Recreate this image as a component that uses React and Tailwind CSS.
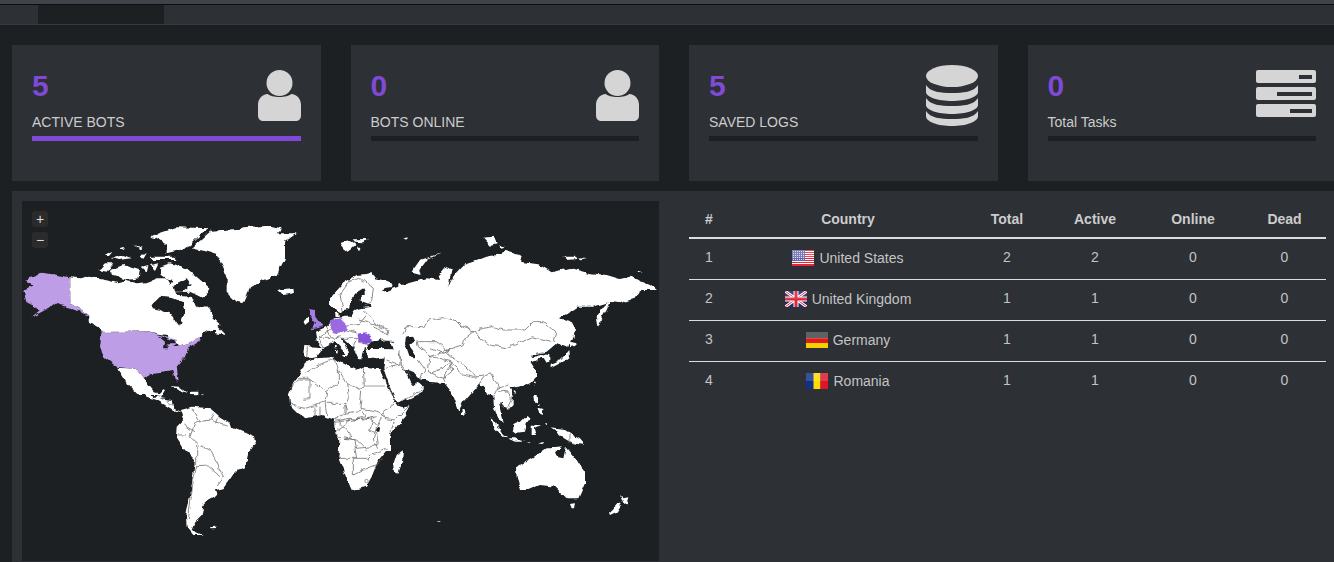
import React from 'react';

// Map shapes are traced per region; each frame's coordinates are 3x page pixels from its origin
const DARK = '#1c2022';

const REGIONS = [
  {
    // North America, Greenland
    frame: 'translate(10 195) scale(.33333)',
    land: [
      '180,247 210,250 240,242 270,252 300,258 325,265 350,258 380,265 410,262 440,250 470,250 480,268 495,240 520,245 540,262 570,270 600,280 580,310 560,340 585,330 600,345 610,370 632,390 620,400 648,420 620,415 580,420 570,430 540,445 510,455 490,440 470,420 440,415 420,410 275,412 270,400 240,380 238,365 205,335 180,327',
      '315,518 350,520 380,522 405,552 412,570 430,590 460,600 385,600 345,560 335,540',
      '545,160 600,110 680,105 700,97 780,92 815,100 800,115 860,115 825,140 825,190 800,240 760,255 720,280 700,325 680,320 650,290 650,250 640,220 620,180 590,170',
      '805,285 850,278 852,295 820,300',
      '445,115 500,97 600,100 570,120 540,150 510,165 470,175 470,150 440,130 420,125',
      '450,215 480,205 530,220 600,280 580,310 540,280 500,260 470,250 455,240',
      '300,225 340,210 390,225 385,250 350,255 310,240',
      '265,225 285,205 310,205 290,230',
      '280,180 310,168 300,180',
      '305,190 340,180 365,190 330,195',
      '385,180 410,178 400,195',
      '395,215 415,210 410,230',
      '420,210 445,205 435,225',
      '370,150 395,158 390,163',
      '420,185 490,185 500,195 430,195',
      '330,160 345,155 342,165',
      '590,395 625,395 648,420 620,410',
    ],
    seas: [
      '425,330 450,305 490,310 515,320 525,350 510,395 495,375 490,360 450,345 425,340',
      '490,270 530,250 545,270 520,290 495,290',
      '495,292 540,290 590,315 585,330 560,340 545,305 500,302',
      '575,420 600,405 620,405 610,425 590,435',
      '310,518 320,515 350,565 340,565',
    ],
    lines: ['180,247 180,327', '275,412 420,410'],
  },
  {
    // Russia, central Asia
    frame: 'translate(330 195) scale(.33333)',
    land: [
      '0,310 40,265 80,240 125,235 135,250 185,262 188,275 160,280 155,292 205,275 205,262 215,270 290,250 330,255 325,240 345,215 365,222 355,275 372,240 400,210 430,200 470,185 510,178 525,167 575,182 570,200 625,208 665,232 720,218 780,235 830,240 870,252 900,245 960,270 978,285 930,285 915,310 870,325 840,320 790,335 740,335 690,370 720,378 735,400 725,430 715,455 680,445 650,470 605,480 600,545 360,540 225,500 190,440 110,440 50,380 30,350 0,335',
      '800,365 820,335 845,310 830,345 815,370 805,395',
      '725,380 735,400 730,430 722,405',
      '28,145 60,135 80,150 55,172 40,160',
      '68,133 110,132 100,142 75,140',
      '82,158 95,158 90,165',
      '220,130 240,127 230,135',
      '460,128 490,125 500,145 480,150',
      '505,150 528,155 510,160',
      '700,185 735,185 740,192 710,195',
      '745,190 768,192 750,196',
      '920,230 938,232 925,235',
      '245,230 270,195 335,175 290,195 268,225 272,237',
    ],
    seas: [
      '100,283 105,295 85,315 120,328 125,335 90,340 75,345 60,365 35,365 30,355 58,340 60,318 80,295',
      '112,448 125,440 150,432 165,440 190,455 190,463 150,462 115,462',
      '228,428 245,425 252,440 240,450 255,480 255,490 240,488 232,465 225,445',
    ],
    lines: [
      '218,415 230,395 285,395 295,375 340,368 375,375 395,395 432,408',
      '432,408 460,400 490,395 520,405 585,405 610,380 640,380 680,415 672,440 605,425 570,440 530,458 480,450 450,430 432,408',
      '432,408 405,430 395,450 350,465 325,440 265,440 260,435',
      '262,440 265,455 300,485 345,470 360,485 390,500 440,545',
      '300,480 295,530 340,550 365,530 360,500',
      '208,475 215,510 240,545',
      '40,350 30,300 60,258 95,248',
      '95,250 130,280 125,320 100,335',
      '100,345 120,365 140,390 180,405 175,420 130,395',
      '340,465 360,460 345,475',
    ],
  },
  {
    // Europe, Turkey
    frame: 'translate(285 270) scale(.33333)',
    land: [
      '90,185 125,170 150,145 180,140 225,140 300,150 320,180 300,215 250,240 240,230 232,265 220,265 205,232 175,205 150,210 125,225 110,232 95,215',
      '58,228 115,232 95,262 65,265 55,250',
      '150,205 170,205 195,250 185,262 180,248 155,222',
      '245,240 270,232 330,235 350,245 345,265 300,262 250,268',
      '150,125 160,125 162,140 152,140',
      '170,255 185,255 180,263',
      '150,228 155,228 155,235 150,235',
      '150,240 155,240 155,250 150,250',
      '310,215 350,225 370,240 350,250 320,235',
      '55,150 72,143 72,155 60,165',
      '340,250 370,235 400,260 400,300 345,300 335,270',
    ],
    seas: [],
    lines: [
      '125,170 135,195 150,205 170,200',
      '185,165 225,160 240,140',
      '185,180 220,190',
      '220,150 270,165 300,180',
      '170,205 215,205 205,232',
      '220,215 250,225',
      '67,232 65,262',
      '150,170 100,205 115,232',
      '100,205 150,205',
    ],
  },
  {
    // North Africa, Arabia, Iran
    frame: 'translate(285 350) scale(.33333)',
    land: [
      '60,38 95,25 145,22 165,35 195,50 215,60 235,50 285,55 290,70 335,160 345,175 375,168 360,195 335,230 315,255 315,300 165,300 160,240 150,210 110,195 65,205 40,190 15,165 12,130 25,100 40,80',
      '295,55 300,15 360,15 360,65 375,95 385,108 400,97 417,110 412,125 380,142 340,160 318,120',
      '300,0 480,0 480,100 430,95 405,88 385,65 365,60 340,40 310,28',
    ],
    seas: ['272,240 280,230 288,235 286,245 276,245'],
    lines: [
      '60,70 100,45 150,25',
      '40,85 70,85 125,125 160,100 160,60 150,25',
      '235,55 238,110',
      '160,60 185,100 225,118 238,110',
      '185,100 190,145 180,170 185,185',
      '230,122 225,175',
      '225,175 260,180 290,190 330,160',
      '290,190 300,205 330,210 370,170',
      '330,210 315,250',
      '290,205 275,230 265,270 275,300',
      '15,115 40,90 75,90 75,145 55,148',
      '125,125 120,155 80,170 60,175 35,170 15,160',
      '120,155 125,195',
      '90,170 90,200',
      '105,170 105,195',
      '125,160 180,160 180,190 150,210',
      '180,190 230,180 240,200 205,210 160,215',
      '205,210 255,205 275,225',
      '160,215 185,240 200,260 180,265 215,270 235,290 245,300',
      '300,55 345,45 358,62',
      '338,160 385,130 405,125 412,110',
      '305,30 340,45',
      '345,0 345,45',
      '400,30 420,60 405,88',
    ],
  },
  {
    // South and East Asia, Japan, Indonesia
    frame: 'translate(430 340) scale(.33333)',
    land: [
      '0,0 395,0 365,15 340,35 325,30 310,30 295,45 305,55 325,45 335,42 358,45 358,65 345,68 335,52 318,65 305,70 318,90 318,112 300,130 262,145 238,140 248,165 248,195 232,212 218,182 208,190 222,245 205,235 192,205 190,170 172,165 160,140 148,130 100,185 85,215 60,150 40,125 0,120',
      '94,208 102,212 104,225 96,225',
      '250,152 258,150 256,160',
      '312,125 318,125 312,138',
      '362,75 385,65 410,40 418,30 420,50 405,62 370,80 362,85',
      '420,5 440,10 432,18 420,22',
      '310,165 320,165 322,185 312,185',
      '322,205 340,210 338,225 328,222',
      '250,255 270,245 290,225 300,235 290,250 285,275 260,278 250,270',
      '305,262 315,255 330,255 312,265 318,285 305,285',
      '178,232 195,245 222,285 232,292 220,290 195,265',
      '232,295 255,295 282,305 255,305',
      '365,265 385,268 405,270 420,280 450,298 465,315 430,310 405,295 380,275',
      '365,325 395,322 390,330 368,330',
      '325,190 332,190 330,198',
      '345,250 352,250 350,256',
      '290,308 305,306 300,310',
      '325,310 340,306 335,312',
    ],
    seas: [],
    lines: [
      '148,130 165,108 180,100 192,120 208,140 195,165 192,172',
      '90,95 100,105 130,112 160,108',
      '60,68 85,90 90,95',
      '0,100 40,85 62,65',
      '40,125 45,100 62,80',
      '205,145 235,135',
      '205,155 225,150 245,175 232,205 210,190',
      '0,25 40,40 60,30',
      '0,50 30,55 62,65',
      '420,280 420,310',
      '340,35 320,40',
    ],
  },
  {
    // Central America, Caribbean
    frame: 'translate(130 340) scale(.33333)',
    land: [
      '0,85 20,95 35,125 50,155 75,175 100,148 105,150 90,175 125,180 130,205 155,218 130,210 105,195 80,180 50,170 20,140',
      '120,138 150,140 175,160 150,150',
      '180,155 205,155 205,163 180,162',
      '212,160 220,160 220,163',
    ],
    seas: [],
    lines: ['85,165 100,180', '110,180 125,195'],
  },
  {
    // South America, southern Africa, Oceania
    frame: 'translate(130 380) scale(.33333)',
    land: [
      '150,90 185,80 240,85 270,110 295,125 300,140 375,172 378,185 355,220 345,262 315,275 305,290 280,325 258,330 262,345 235,360 220,375 215,405 195,425 185,450 218,465 190,465 170,440 168,410 180,350 190,280 195,240 160,205 138,170 140,140 160,120',
      '612,120 620,60 760,60 825,85 800,130 770,155 768,190 775,205 745,240 725,290 708,320 665,330 650,295 625,235 630,175 615,160',
      '800,225 822,208 820,240 805,278 792,272 790,255',
      '1158,262 1210,232 1250,205 1275,205 1285,232 1300,235 1308,200 1340,240 1365,280 1365,310 1345,355 1310,355 1275,320 1230,315 1195,330 1170,330 1160,290',
      '1320,372 1338,370 1335,385 1325,385',
      '1470,345 1480,355 1495,352 1490,370 1480,372',
      '1465,370 1475,372 1460,395 1440,405 1437,398',
      '243,442 256,440 256,444 244,445',
      '922,423 931,423 931,428 922,428',
    ],
    seas: [],
    lines: [
      '185,85 210,125 195,130 180,170 205,195',
      '160,135 195,155',
      '140,165 170,165',
      '205,195 240,210 260,245 270,270 280,290 265,315',
      '200,195 200,260 190,300 175,420',
      '200,260 235,258 270,290',
      '210,125 240,120 290,135',
      '240,120 250,100',
      '265,110 260,130',
      '640,170 675,180 680,205 725,200 745,195 740,160 720,150 730,110',
      '625,235 670,235 710,235 720,225 770,205',
      '670,235 670,285 700,270 735,260 755,240',
      '660,115 650,135 625,150 615,160 630,170',
      '675,205 680,235',
      '610,125 660,115 700,120 740,110',
    ],
  },
];

const HIGHLIGHTS = [
  { frame: REGIONS[0].frame, fill: '#bd9de6', points: '45,255 100,233 180,247 180,327 205,335 238,365 205,345 130,325 115,340 60,370 90,345 50,325 40,285 70,270' },
  { frame: REGIONS[0].frame, fill: '#bd9de6', points: '275,412 420,410 445,418 470,425 500,435 490,455 510,455 540,445 570,425 575,435 535,460 525,485 500,515 505,550 498,560 490,525 455,530 420,535 405,552 380,522 350,520 320,515 285,490 270,455' },
  { frame: REGIONS[0].frame, fill: DARK, points: '440,420 490,435 495,445 475,445 470,460 462,460 465,440' },
  { frame: REGIONS[2].frame, fill: '#a47ee4', points: '75,118 90,120 90,135 112,165 108,172 80,178 90,160 75,140' },
  { frame: REGIONS[2].frame, fill: '#9a6ae0', points: '140,150 165,145 185,165 185,180 165,195 145,190 135,165' },
  { frame: REGIONS[2].frame, fill: '#8653da', points: '218,195 240,190 258,198 262,215 240,222 220,210' },
];

function WorldMap() {
  return (
    <svg viewBox="22 201 637 360" className="block w-[637px] h-[360px]">
      {/* roughens the traced outlines so coasts read as coasts */}
      <filter id="rough" x="0" y="0" width="100%" height="100%" filterUnits="objectBoundingBox" colorInterpolationFilters="sRGB">
        <feTurbulence type="fractalNoise" baseFrequency="0.14" numOctaves="2" seed="4" result="noise" />
        <feDisplacementMap in="SourceGraphic" in2="noise" scale="5" xChannelSelector="R" yChannelSelector="G" />
      </filter>
      <g filter="url(#rough)">
        <rect x="22" y="201" width="637" height="360" fill="none" />
        {REGIONS.map((r, i) => (
          <g key={i} transform={r.frame} fill="#ffffff">
            {r.land.map((p, j) => <polygon key={j} points={p} />)}
          </g>
        ))}
        {REGIONS.map((r, i) => (
          <g key={i} transform={r.frame} fill={DARK}>
            {r.seas.map((p, j) => <polygon key={j} points={p} />)}
          </g>
        ))}
        {REGIONS.map((r, i) => (
          <g key={i} transform={r.frame} fill="none" stroke="#6f6f6f">
            {r.lines.map((p, j) => (
              <polyline key={j} points={p} strokeWidth="0.8" vectorEffect="non-scaling-stroke" />
            ))}
          </g>
        ))}
        {HIGHLIGHTS.map((h, i) => (
          <polygon key={i} transform={h.frame} points={h.points} fill={h.fill} />
        ))}
      </g>
      <g transform={REGIONS[3].frame} fill="none" stroke="#c4c4c4">
        <polyline points="238,108 300,108" strokeWidth="1.6" vectorEffect="non-scaling-stroke" />
        <polyline points="55,146 75,146" strokeWidth="1.6" vectorEffect="non-scaling-stroke" />
      </g>
      <circle cx="366.5" cy="481" r="1.7" fill="#ffffff" stroke="#6f6f6f" strokeWidth="0.7" />
    </svg>
  );
}

function UserIcon() {
  return (
    <svg width="43" height="51" viewBox="0 0 43 51" className="mt-[5px]" fill="#d5d5d5">
      <circle cx="21.5" cy="13" r="13" />
      <path d="M10 24 C13 28 30 28 33 24 C39 24 43 29 43 35 L43 45 C43 49 41 51 37 51 L6 51 C2 51 0 49 0 45 L0 35 C0 29 4 24 10 24 Z" />
    </svg>
  );
}

function DatabaseIcon() {
  return (
    <svg width="52" height="61" viewBox="0 0 52 61" fill="#d5d5d5">
      <ellipse cx="26" cy="11" rx="26" ry="11" />
      <path d="M0 20 C4 27 15 28 26 28 C37 28 48 27 52 20 L52 27 C52 32 40 36 26 36 C12 36 0 32 0 27 Z" />
      <path d="M0 33 C4 40 15 41 26 41 C37 41 48 40 52 33 L52 40 C52 45 40 49 26 49 C12 49 0 45 0 40 Z" />
      <path d="M0 46 C4 53 15 54 26 54 C37 54 48 53 52 46 L52 51 C52 57 40 61 26 61 C12 61 0 57 0 51 Z" />
    </svg>
  );
}

function ServerIcon() {
  return (
    <svg width="60" height="47" viewBox="0 0 60 47" className="mt-[5px]" fill="#d5d5d5">
      <rect width="60" height="13" rx="2" />
      <rect y="17" width="60" height="13" rx="2" />
      <rect y="34" width="60" height="13" rx="2" />
      <rect x="43" y="5" width="13" height="4" fill="#2d3035" />
      <rect x="21" y="22" width="35" height="4" fill="#2d3035" />
      <rect x="34" y="39" width="22" height="4" fill="#2d3035" />
    </svg>
  );
}

function Gloss() {
  return <rect width="22" height="8" fill="#ffffff" opacity="0.16" />;
}

function FlagUS() {
  const stripes = [0, 1, 2, 3, 4, 5, 6, 7];
  return (
    <svg width="22" height="16" viewBox="0 0 22 16">
      <rect width="22" height="16" fill="#ffffff" />
      {stripes.map((s) => <rect key={s} y={s * 2} width="22" height="1" fill="#e0263a" />)}
      <rect y="15" width="22" height="1" fill="#e0263a" />
      <rect width="13" height="11" fill="#6266ad" />
      {[1, 3, 5, 7, 9].map((y) => (
        <g key={y} fill="#d6d7ea">
          {[1, 3, 5, 7, 9, 11].map((x) => <rect key={x} x={x} y={y} width="1" height="1" />)}
        </g>
      ))}
      <Gloss />
    </svg>
  );
}

function FlagUK() {
  return (
    <svg width="22" height="16" viewBox="0 0 22 16">
      <rect width="22" height="16" fill="#232a6b" />
      <path d="M0 0 L22 16 M22 0 L0 16" stroke="#ffffff" strokeWidth="3" />
      <path d="M0 0 L22 16 M22 0 L0 16" stroke="#d8293c" strokeWidth="1" />
      <path d="M11 0 V16 M0 8 H22" stroke="#ffffff" strokeWidth="5" />
      <path d="M11 0 V16 M0 8 H22" stroke="#d8293c" strokeWidth="3" />
      <rect width="22" height="8" fill="#ffffff" opacity="0.1" />
    </svg>
  );
}

function FlagDE() {
  return (
    <svg width="22" height="16" viewBox="0 0 22 16">
      <rect width="22" height="6" fill="#3a3a3a" />
      <rect y="6" width="22" height="5" fill="#dd1c1c" />
      <rect y="11" width="22" height="5" fill="#f5d000" />
      <rect width="22" height="7" fill="#ffffff" opacity="0.2" />
    </svg>
  );
}

function FlagRO() {
  return (
    <svg width="22" height="16" viewBox="0 0 22 16">
      <rect width="7.5" height="16" fill="#10308a" />
      <rect x="7.5" width="7" height="16" fill="#fbdc00" />
      <rect x="14.5" width="7.5" height="16" fill="#e0142a" />
      <Gloss />
    </svg>
  );
}

const STATS = [
  { value: '5', label: 'ACTIVE BOTS', icon: UserIcon, full: true },
  { value: '0', label: 'BOTS ONLINE', icon: UserIcon, full: false },
  { value: '5', label: 'SAVED LOGS', icon: DatabaseIcon, full: false },
  { value: '0', label: 'Total Tasks', icon: ServerIcon, full: false },
];

const COUNTRIES = [
  { id: 1, name: 'United States', flag: FlagUS, total: 2, active: 2 },
  { id: 2, name: 'United Kingdom', flag: FlagUK, total: 1, active: 1 },
  { id: 3, name: 'Germany', flag: FlagDE, total: 1, active: 1 },
  { id: 4, name: 'Romania', flag: FlagRO, total: 1, active: 1 },
];

function StatCard({ stat }) {
  const Icon = stat.icon;
  return (
    <div className="h-[136px] bg-[#2d3035] px-5 pt-5">
      <div className="flex justify-between h-[67px]">
        <div className="pt-[6px]">
          <div className="text-[30px] leading-[30px] font-bold text-[#8049d6]">{stat.value}</div>
          <div className="mt-[11px] text-sm leading-5 text-[#cccccc]">{stat.label}</div>
        </div>
        <Icon />
      </div>
      <div className={`mt-1 h-[5px] ${stat.full ? 'bg-[#8049d6]' : 'bg-[#1c2022]'}`} />
    </div>
  );
}

function CountryTable() {
  return (
    <table className="self-start w-[637px] table-fixed border-collapse text-sm text-center text-[#c4c4c4]">
      <thead>
        <tr className="h-[37px] border-b-2 border-[#dddddd] text-[#cccccc]">
          <th className="w-[40px] font-bold pb-px">#</th>
          <th className="w-[238px] font-bold pb-px">Country</th>
          <th className="w-[80px] font-bold pb-px">Total</th>
          <th className="w-[96px] font-bold pb-px">Active</th>
          <th className="w-[100px] font-bold pb-px">Online</th>
          <th className="w-[83px] font-bold pb-px">Dead</th>
        </tr>
      </thead>
      <tbody>
        {COUNTRIES.map((c, i) => {
          const Flag = c.flag;
          return (
            <tr key={c.id} className={`h-[41px] ${i < COUNTRIES.length - 1 ? 'border-b border-[#dddddd]' : ''}`}>
              <td className="align-top pt-2">{c.id}</td>
              <td className="align-top pt-2">
                <span className="inline-flex items-center gap-[5px] h-5 translate-y-px">
                  <Flag />
                  {c.name}
                </span>
              </td>
              <td className="align-top pt-2">{c.total}</td>
              <td className="align-top pt-2">{c.active}</td>
              <td className="align-top pt-2">0</td>
              <td className="align-top pt-2">0</td>
            </tr>
          );
        })}
      </tbody>
    </table>
  );
}

export default function App() {
  return (
    <div className="h-[562px] w-[1334px] overflow-hidden bg-[#1c2022] font-['Liberation_Sans',sans-serif]">
      <div className="h-1 bg-[#3f434a]" />
      <div className="h-px bg-[#0c0e10]" />
      <div className="h-5 pl-[38px] bg-[#2d3035] border-b border-[#363b40]">
        <div className="w-[126px] h-[19px] bg-[#1c2022]" />
      </div>

      <div className="w-[1324px] ml-3 pt-5">
        <div className="grid grid-cols-4 gap-[30px]">
          {STATS.map((s) => <StatCard key={s.label} stat={s} />)}
        </div>

        <div className="mt-[10px] h-[400px] bg-[#2d3035] p-[10px] flex gap-[30px]">
          <div className="relative w-[637px] h-[360px] bg-[#1c2022] shrink-0">
            <WorldMap />
            <div className="absolute left-[10px] top-[10px] flex flex-col gap-[5px]">
              <button type="button" className="w-4 h-4 rounded-[3px] bg-[#2b2b2b] text-[#dddddd] text-sm leading-4 text-center">+</button>
              <button type="button" className="w-4 h-4 rounded-[3px] bg-[#2b2b2b] text-[#dddddd] text-sm leading-4 text-center">−</button>
            </div>
          </div>
          <CountryTable />
        </div>
      </div>
    </div>
  );
}
